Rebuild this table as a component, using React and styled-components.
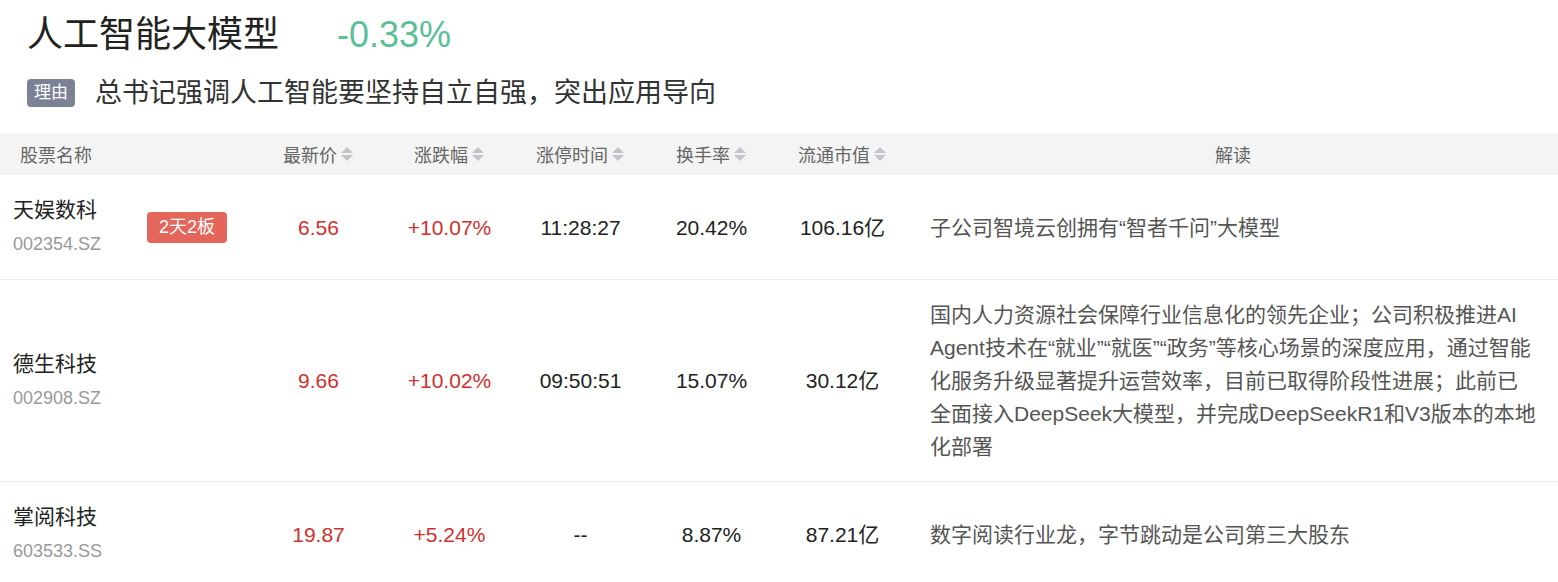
import React from "react";
import styled, { createGlobalStyle } from "styled-components";

const GlobalStyle = createGlobalStyle`
  body {
    margin: 0;
    background: #fff;
    font-family: "Liberation Sans", "Noto Sans CJK SC", sans-serif;
  }
`;

const Page = styled.div`
  width: 1558px;
`;

const Top = styled.div`
  padding: 13px 27px 0;
`;

const TitleRow = styled.div`
  display: flex;
  align-items: baseline;
  gap: 58px;
  height: 44px;
`;

const Title = styled.h1`
  margin: 0;
  font-size: 36px;
  font-weight: normal;
  line-height: 44px;
  color: #222;
`;

const Change = styled.span`
  font-size: 36px;
  line-height: 44px;
  color: #5dbf97;
`;

const ReasonRow = styled.div`
  display: flex;
  align-items: center;
  gap: 20px;
  margin-top: 18px;
  height: 36px;
`;

const Tag = styled.span`
  display: inline-block;
  height: 28px;
  line-height: 28px;
  padding: 0 7px;
  border-radius: 4px;
  background: #7c8295;
  color: #fff;
  font-size: 17px;
`;

const Reason = styled.span`
  font-size: 27px;
  line-height: 36px;
  color: #333;
`;

const Table = styled.div`
  margin-top: 22px;
`;

const Row = styled.div`
  display: grid;
  grid-template-columns: 253px repeat(5, 131px) 1fr;
  align-items: center;
  background: ${(p) => (p.$head ? "#f4f4f4" : "#fff")};
  height: ${(p) => (p.$head ? "42px" : "auto")};
  border-bottom: ${(p) => (p.$head ? "none" : "1px solid #ebebeb")};
`;

const HeadCell = styled.div`
  display: flex;
  align-items: center;
  justify-content: ${(p) => (p.$left ? "flex-start" : "center")};
  padding-left: ${(p) => (p.$left ? "20px" : "0")};
  gap: 3px;
  font-size: 18px;
  color: #666;
`;

const NameCell = styled.div`
  display: flex;
  align-items: center;
  padding: 18px 0 18px 13px;
`;

const NameBlock = styled.div`
  width: 134px;
  line-height: 34px;
`;

const StockName = styled.div`
  font-size: 21px;
  color: #222;
`;

const Code = styled.div`
  font-size: 18px;
  color: #999;
`;

const Badge = styled.span`
  display: inline-block;
  height: 31px;
  line-height: 31px;
  padding: 0 12px;
  border-radius: 4px;
  background: #e4655a;
  color: #fff;
  font-size: 18px;
`;

const Value = styled.div`
  text-align: center;
  font-size: 21px;
  line-height: 33px;
  color: ${(p) => (p.$up ? "#d0302d" : "#222")};
`;

const Interp = styled.div`
  padding: 18px 20px 18px 22px;
  font-size: 21px;
  line-height: 33px;
  color: #555;
`;

const SortIcon = () => (
  <svg width="14" height="16" viewBox="0 0 14 16">
    <path d="M1 7 L7 1 L13 7 Z" fill="#c3c4c9" />
    <path d="M1 9 L7 15 L13 9 Z" fill="#c3c4c9" />
  </svg>
);

const stocks = [
  {
    name: "天娱数科",
    code: "002354.SZ",
    badge: "2天2板",
    price: "6.56",
    change: "+10.07%",
    time: "11:28:27",
    turnover: "20.42%",
    cap: "106.16亿",
    note: "子公司智境云创拥有“智者千问”大模型",
  },
  {
    name: "德生科技",
    code: "002908.SZ",
    price: "9.66",
    change: "+10.02%",
    time: "09:50:51",
    turnover: "15.07%",
    cap: "30.12亿",
    note:
      "国内人力资源社会保障行业信息化的领先企业；公司积极推进AI Agent技术在“就业”“就医”“政务”等核心场景的深度应用，通过智能化服务升级显著提升运营效率，目前已取得阶段性进展；此前已全面接入DeepSeek大模型，并完成DeepSeekR1和V3版本的本地化部署",
  },
  {
    name: "掌阅科技",
    code: "603533.SS",
    price: "19.87",
    change: "+5.24%",
    time: "--",
    turnover: "8.87%",
    cap: "87.21亿",
    note: "数字阅读行业龙，字节跳动是公司第三大股东",
  },
];

const sortable = ["最新价", "涨跌幅", "涨停时间", "换手率", "流通市值"];

export default function App() {
  return (
    <Page>
      <GlobalStyle />
      <Top>
        <TitleRow>
          <Title>人工智能大模型</Title>
          <Change>-0.33%</Change>
        </TitleRow>
        <ReasonRow>
          <Tag>理由</Tag>
          <Reason>总书记强调人工智能要坚持自立自强，突出应用导向</Reason>
        </ReasonRow>
      </Top>
      <Table>
        <Row $head>
          <HeadCell $left>股票名称</HeadCell>
          {sortable.map((h) => (
            <HeadCell key={h}>
              {h}
              <SortIcon />
            </HeadCell>
          ))}
          <HeadCell>解读</HeadCell>
        </Row>
        {stocks.map((s) => (
          <Row key={s.code}>
            <NameCell>
              <NameBlock>
                <StockName>{s.name}</StockName>
                <Code>{s.code}</Code>
              </NameBlock>
              {s.badge && <Badge>{s.badge}</Badge>}
            </NameCell>
            <Value $up>{s.price}</Value>
            <Value $up>{s.change}</Value>
            <Value>{s.time}</Value>
            <Value>{s.turnover}</Value>
            <Value>{s.cap}</Value>
            <Interp>{s.note}</Interp>
          </Row>
        ))}
      </Table>
    </Page>
  );
}
